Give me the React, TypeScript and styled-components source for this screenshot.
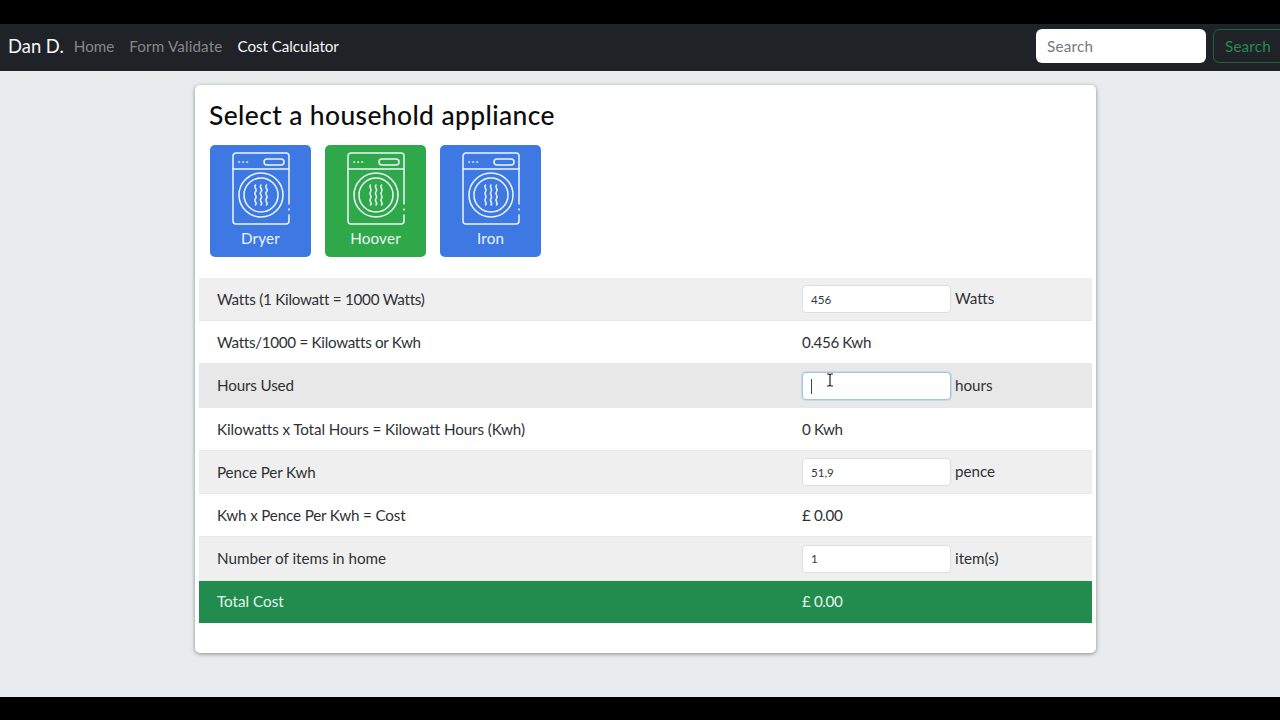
import React from "react";
import styled, { createGlobalStyle } from "styled-components";

const Global = createGlobalStyle`
  html, body { margin: 0; padding: 0; background: #000; }
  * { box-sizing: border-box; }
  body { font-family: "Lato", "Open Sans", sans-serif; }
`;

const Page = styled.div`
  width: 1280px; height: 720px; overflow: hidden; background: #000;
  display: flex; flex-direction: column; padding: 24px 0 23px;
`;
const Nav = styled.nav`
  height: 47px; flex: none; background: #1f2327; display: flex; align-items: center;
  padding: 0 0 3px 8px; width: 1280px; overflow: hidden;
`;
const Brand = styled.span`
  color: #f4f6f7; font-size: 18.4px; margin-right: 10px;
`;
const NavLink = styled.span<{ $active?: boolean; $track: number }>`
  color: ${p => (p.$active ? "#f5f6f7" : "#85888b")}; font-size: 15.2px; margin-right: 15px;
  letter-spacing: ${p => p.$track}px;
`;
const SearchForm = styled.div`
  margin-left: auto; display: flex; gap: 7px; margin-right: -8px;
`;
const SearchInput = styled.div`
  width: 170px; height: 34px; background: #fff; border-radius: 6px; color: #74797d;
  font-size: 15.2px; display: flex; align-items: center; padding-left: 11px; letter-spacing: .25px;
`;
const SearchButton = styled.div`
  width: 75px; height: 34px; border: 1px solid #22613f; border-radius: 6px; color: #268a54;
  font-size: 15.2px; display: flex; align-items: center; padding-left: 11px; letter-spacing: .2px;
`;
const Main = styled.main`
  flex: 1; background: #e9ecef; padding: 14px 184px 0 195px;
`;
const Card = styled.section`
  width: 901px; height: 568px; background: #fff; border-radius: 5px;
  box-shadow: 0 1px 4px rgba(0,0,0,.42); padding: 13px 4px 0;
`;
const Title = styled.h1`
  margin: 0 0 0 10px; font-size: 26.4px; line-height: 34px; font-weight: 500; color: #0c0c0c; letter-spacing: .4px;
`;
const Tiles = styled.div`
  display: flex; gap: 14px; margin: 13px 0 21px 11px;
`;
const Tile = styled.div<{ $color: string }>`
  width: 101px; height: 112px; border-radius: 5px; background: ${p => p.$color};
  display: flex; flex-direction: column; align-items: center; padding-top: 7px; color: #eef5fb; font-size: 15.2px;
`;
const TileLabel = styled.span`
  margin-top: 2px; line-height: 20px; letter-spacing: .2px;
`;
const Rows = styled.div`display: flex; flex-direction: column;`;
const Row = styled.div<{ $bg: string; $h: number; $light?: boolean }>`
  height: ${p => p.$h}px; background: ${p => p.$bg};
  color: ${p => (p.$light ? "#e4f5ea" : "#2e3134")};
  display: flex; align-items: center; font-size: 15.2px;
  border-bottom: 1px solid ${p => (p.$light ? "#218a4e" : "#e6e8ea")};
`;
const Label = styled.div<{ $track: number; $lift: boolean }>`
  width: 603px; padding: 0 0 ${p => (p.$lift ? 1 : 0)}px 18px; letter-spacing: ${p => p.$track}px;
`;
const Value = styled.div`display: flex; align-items: center; gap: 4px;`;
const Computed = styled.span<{ $lift: boolean }>`
  letter-spacing: -.4px; padding-bottom: ${p => (p.$lift ? 1 : 0)}px;
`;
const Unit = styled.span`padding-bottom: 2px;`;
const Field = styled.div<{ $focus?: boolean }>`
  width: 149px; height: 28px; background: ${p => (p.$focus ? "#fdfefe" : "#fff")}; border-radius: 4px;
  border: 1px solid ${p => (p.$focus ? "#a9c2de" : "#dcdfe2")};
  box-shadow: ${p => (p.$focus ? "0 0 0 1px #c9d9ea" : "none")};
  display: flex; align-items: center; padding-left: 8px; font-size: 11.6px; color: #33373a; position: relative;
`;
const Caret = styled.span`
  width: 1px; height: 15px; background: #444; margin-top: 1px;
`;
const Cursor = styled.svg`
  position: absolute; left: 23px; top: 0;
`;

const Washer = () => (
  <svg width="60" height="74" viewBox="0 0 60 74" fill="none" stroke="currentColor" strokeWidth="1.5" strokeLinecap="round" strokeLinejoin="round">
    <path d="M2 17V4a3 3 0 0 1 3-3h50a3 3 0 0 1 3 3v13z" />
    <path d="M2 17v52a3 3 0 0 0 3 3h50a3 3 0 0 0 3-3v-6M58 58v-1M58 52V17" />
    <rect x="33" y="7" width="20" height="6" rx="3" />
    <path d="M8 10h.4M12 10h.4M16 10h.4" strokeWidth="1.7" />
    <circle cx="30" cy="43" r="22" />
    <circle cx="30" cy="43" r="17" />
    <path d="M24.5 33c-2.5 2.5 2.5 4 0 6.7s2.5 4 0 6.7 2.5 4 0 6.6M30 33c-2.5 2.5 2.5 4 0 6.7s2.5 4 0 6.7 2.5 4 0 6.6M35.5 33c-2.5 2.5 2.5 4 0 6.7s2.5 4 0 6.7 2.5 4 0 6.6" />
  </svg>
);

const appliances = [
  { name: "Dryer", color: "#3d78e3" },
  { name: "Hoover", color: "#2fa84a" },
  { name: "Iron", color: "#3d78e3" },
];

const rows: { label: string; track: number; h: number; bg: string; value?: string; field?: string; unit?: string; focus?: boolean; light?: boolean }[] = [
  { label: "Watts (1 Kilowatt = 1000 Watts)", track: -0.25, h: 43, bg: "#efefef", field: "456", unit: "Watts" },
  { label: "Watts/1000 = Kilowatts or Kwh", track: -0.3, h: 43, bg: "#fff", value: "0.456 Kwh" },
  { label: "Hours Used", track: -0.15, h: 44, bg: "#e8e8e8", field: "", unit: "hours", focus: true },
  { label: "Kilowatts x Total Hours = Kilowatt Hours (Kwh)", track: -0.1, h: 43, bg: "#fff", value: "0 Kwh" },
  { label: "Pence Per Kwh", track: -0.1, h: 43, bg: "#efefef", field: "51,9", unit: "pence" },
  { label: "Kwh x Pence Per Kwh = Cost", track: -0.15, h: 43, bg: "#fff", value: "£ 0.00" },
  { label: "Number of items in home", track: 0, h: 44, bg: "#efefef", field: "1", unit: "item(s)" },
  { label: "Total Cost", track: 0, h: 42, bg: "#218c4e", value: "£ 0.00", light: true },
];

export default function App() {
  return (
    <Page>
      <Global />
      <Nav>
        <Brand>Dan D.</Brand>
        <NavLink $track={0}>Home</NavLink>
        <NavLink $track={0.15}>Form Validate</NavLink>
        <NavLink $active $track={-0.05}>Cost Calculator</NavLink>
        <SearchForm>
          <SearchInput>Search</SearchInput>
          <SearchButton>Search</SearchButton>
        </SearchForm>
      </Nav>
      <Main>
        <Card>
          <Title>Select a household appliance</Title>
          <Tiles>
            {appliances.map(a => (
              <Tile key={a.name} $color={a.color}>
                <Washer />
                <TileLabel>{a.name}</TileLabel>
              </Tile>
            ))}
          </Tiles>
          <Rows>
            {rows.map(r => (
              <Row key={r.label} $bg={r.bg} $h={r.h} $light={r.light}>
                <Label $track={r.track} $lift={r.h % 2 === 0}>{r.label}</Label>
                <Value>
                  {r.value && <Computed $lift={r.h % 2 === 0}>{r.value}</Computed>}
                  {r.unit && (
                    <>
                      <Field $focus={r.focus}>
                        {r.focus && <Caret />}
                        {r.field}
                        {r.focus && (
                          <Cursor width="8" height="14" viewBox="0 0 8 14" fill="none" stroke="#222" strokeWidth="1.2">
                            <path d="M1 1h2l1 1 1-1h2M4 2v10M1 13h2l1-1 1 1h2" />
                          </Cursor>
                        )}
                      </Field>
                      <Unit>{r.unit}</Unit>
                    </>
                  )}
                </Value>
              </Row>
            ))}
          </Rows>
        </Card>
      </Main>
    </Page>
  );
}
